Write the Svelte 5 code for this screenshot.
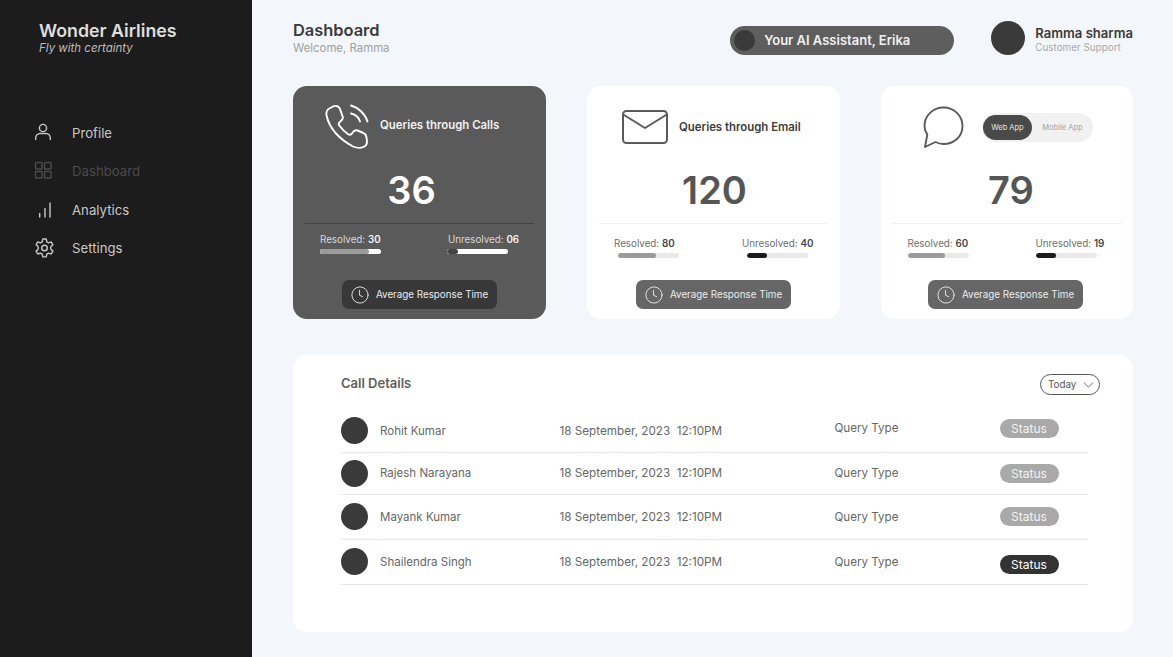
<script>
  const nav = [
    { label: 'Profile', icon: 'user' },
    { label: 'Dashboard', icon: 'grid', dim: true },
    { label: 'Analytics', icon: 'bars' },
    { label: 'Settings', icon: 'gear' },
  ];

  const cards = [
    { kind: 'calls', title: 'Queries through Calls', total: 36, resolved: '30', unresolved: '06', done: 80, open: 18, dark: true },
    { kind: 'email', title: 'Queries through Email', total: 120, resolved: '80', unresolved: '40', done: 62, open: 33 },
    { kind: 'chat', total: 79, resolved: '60', unresolved: '19', done: 62, open: 33 },
  ];

  const calls = [
    { name: 'Rohit Kumar', status: 'Status', cls: 'r1' },
    { name: 'Rajesh Narayana', status: 'Status', cls: 'r2' },
    { name: 'Mayank Kumar', status: 'Status', cls: 'r3' },
    { name: 'Shailendra Singh', status: 'Status', cls: 'r4', active: true },
  ];
</script>

<div class="layout">
  <aside class="sidebar">
    <div class="brand">
      <h1>Wonder Airlines</h1>
      <p>Fly with certainty</p>
    </div>
    <nav>
      {#each nav as item}
        <div class="nav-item" class:dim={item.dim}>
          <svg viewBox="0 0 20 20" width="20" height="20" fill="none" stroke="currentColor" stroke-width="1.4" stroke-linecap="round" stroke-linejoin="round">
            {#if item.icon === 'user'}
              <circle cx="9" cy="5" r="3.600" />
              <path d="M1.700 16.500v-1.500c0-2.500 2-4.500 4.300-4.500h6c2.400 0 4.300 2 4.300 4.500v1.500" />
            {:else if item.icon === 'grid'}
              <rect x="1.500" y="1.500" width="6.500" height="6.500" rx=".5" />
              <rect x="10.500" y="1.500" width="6.500" height="6.500" rx=".5" />
              <rect x="1.500" y="10.500" width="6.500" height="6.500" rx=".5" />
              <rect x="10.500" y="10.500" width="6.500" height="6.500" rx=".5" />
            {:else if item.icon === 'bars'}
              <path d="M5.700 17v-3.500M11 17V8.500M16 17V3" />
            {:else}
              <circle cx="10.500" cy="10" r="2.800" />
              <path d="M8.800 1h3.400l.6 2.800 1.700 1 2.700-.9 1.700 2.900-2.100 1.900v2.500l2.100 1.900-1.700 2.900-2.700-.9-1.700 1-.6 2.800H8.800l-.6-2.800-1.700-1-2.700.9-1.700-2.900 2.100-1.900V8.700L2.100 6.800 3.800 3.900l2.700.9 1.700-1z" />
            {/if}
          </svg>
          <span>{item.label}</span>
        </div>
      {/each}
    </nav>
  </aside>

  <main class="content">
    <header class="topbar">
      <div class="heading">
        <h2>Dashboard</h2>
        <p>Welcome, Ramma</p>
      </div>
      <div class="assistant">
        <span class="assistant-dot"></span>
        <span>Your AI Assistant, Erika</span>
      </div>
      <div class="account">
        <span class="account-avatar"></span>
        <div class="account-text">
          <strong>Ramma sharma</strong>
          <small>Customer Support</small>
        </div>
      </div>
    </header>

    <section class="cards">
      {#each cards as card}
        <article class="card {card.kind}" class:dark={card.dark}>
          <div class="card-head">
            {#if card.kind === 'calls'}
              <svg class="head-icon" viewBox="0 0 46 46" width="46" height="46" fill="none" stroke="currentColor" stroke-width="1.900" stroke-linecap="round" stroke-linejoin="round">
                <path d="M8 2.500 3.500 5C1.500 6.500 1 8.500 1.500 11c1 6 4 12 9 18 5 5.500 11 10 17.500 13.500 3.500 1.500 7 2 10.500.5 2.500-1 3.500-3 3.500-5.500 0-2.500-.5-5-1.500-7-.8-1-4-2.500-8-4-1.500-.5-3 0-4 1l-2 2.500c-1 1-2.200 1-3.300.3-3-2-6.200-5-8.700-8.500-1-1.300-1-2.500 0-3.500l2.300-2.300c1-1 1.200-2.500.7-3.800L15 5c-1-2.500-4-4-7-2.500Z" />
                <path d="M26 9.500c4 1 8 4 9 8" />
                <path d="M26 1.500c7 2 14 8 16.500 16" />
              </svg>
              <h3>{card.title}</h3>
            {:else if card.kind === 'email'}
              <svg class="head-icon" viewBox="0 0 46 34" width="46" height="34" fill="none" stroke="currentColor" stroke-width="2" stroke-linecap="round" stroke-linejoin="round">
                <rect x="1" y="1" width="44" height="32" rx="3.500" />
                <path d="M2 5l21 13L44 5" />
              </svg>
              <h3>{card.title}</h3>
            {:else}
              <svg class="head-icon" viewBox="0 0 42 42" width="42" height="42" fill="none" stroke="currentColor" stroke-width="1.900" stroke-linecap="round" stroke-linejoin="round">
                <path d="M3 41l2.300-12.500C3 25 2.500 22 2.500 20 2.500 9.500 11 1.500 21.500 1.500S40.500 9.500 40.500 20 32 38 21.500 38c-3 0-5.500-.7-8-2z" />
              </svg>
              <div class="toggle">
                <span class="toggle-on">Web App</span>
                <span class="toggle-off">Mobile App</span>
              </div>
            {/if}
          </div>
          <div class="total">{card.total}</div>
          <div class="stats">
            <div class="stat">
              <span class="stat-label">Resolved: <b>{card.resolved}</b></span>
              <span class="bar"><span class="fill done" style="width: {card.done}%"></span></span>
            </div>
            <div class="stat">
              <span class="stat-label">Unresolved: <b>{card.unresolved}</b></span>
              <span class="bar"><span class="fill open" style="width: {card.open}%"></span></span>
            </div>
          </div>
          <button type="button" class="response">
            <svg viewBox="0 0 20 20" width="18" height="18" fill="none" stroke="currentColor" stroke-width="1" stroke-linecap="round" stroke-linejoin="round">
              <circle cx="10" cy="10" r="9" />
              <path d="M9.500 4.800v5.500l3.500 1.600" />
            </svg>
            Average Response Time
          </button>
        </article>
      {/each}
    </section>

    <section class="details">
      <div class="details-head">
        <h3>Call Details</h3>
        <button type="button" class="range">
          Today
          <svg viewBox="0 0 12 7" width="11" height="6" fill="none" stroke="currentColor" stroke-width="1" stroke-linecap="round" stroke-linejoin="round"><path d="M1 1l5 5 5-5" /></svg>
        </button>
      </div>
      <div class="rows">
        {#each calls as call}
          <div class="row {call.cls}">
            <div class="person">
              <span class="avatar"></span>
              <span class="name">{call.name}</span>
            </div>
            <span class="when">18 September, 2023&nbsp; 12:10PM</span>
            <span class="query">Query Type</span>
            <span class="status" class:active={call.active}>{call.status}</span>
          </div>
        {/each}
      </div>
    </section>
  </main>
</div>

<style>
  :global(body) {
    font-family: Inter, "Noto Sans", sans-serif;
    background: #f3f7fb;
    color: #333;
  }

  h1, h2, h3, p {
    margin: 0;
  }

  .layout {
    display: flex;
    width: 1173px;
    height: 657px;
    overflow: hidden;
  }

  .sidebar {
    flex: 0 0 252px;
    background: #1c1c1c;
    color: #d9d9d9;
    padding: 21px 0 0 39px;
    box-sizing: border-box;
  }

  .brand h1 {
    font-size: 17.800px;
    line-height: 20px;
    font-weight: 600;
    color: #dedede;
  }

  .brand p {
    font-size: 11.500px;
    line-height: 14px;
    font-style: italic;
    color: #bdbdbd;
  }

  nav {
    margin: 59px 0 0 -5px;
    display: flex;
    flex-direction: column;
  }

  .nav-item {
    display: flex;
    align-items: center;
    gap: 18px;
    height: 38.300px;
    font-size: 13.200px;
    color: #c8c8c8;
  }

  .nav-item.dim {
    color: #4a4a4a;
  }

  .content {
    flex: 1;
    padding: 0 40px 0 41px;
    box-sizing: border-box;
    min-width: 0;
  }

  .topbar {
    display: flex;
    align-items: center;
    height: 86px;
    padding-bottom: 6px;
    box-sizing: border-box;
  }

  .heading {
    flex: 1;
    margin-top: -4px;
  }

  .heading h2 {
    font-size: 16.400px;
    line-height: 18px;
    font-weight: 600;
    color: #3a3a3a;
  }

  .heading p {
    margin-top: 2px;
    font-size: 11.400px;
    line-height: 14px;
    color: #a0a0a0;
  }

  .assistant {
    display: flex;
    align-items: center;
    gap: 9px;
    width: 224px;
    height: 29px;
    padding-left: 4px;
    box-sizing: border-box;
    border-radius: 15px;
    background: #5e5e5e;
    color: #f1f1f1;
    font-size: 13px;
    font-weight: 600;
    margin-right: 37px;
  }

  .assistant-dot {
    width: 21px;
    height: 21px;
    border-radius: 50%;
    background: #3a3a3a;
  }

  .account {
    display: flex;
    align-items: center;
    gap: 10px;
    margin-bottom: 4px;
  }

  .account-avatar {
    width: 34px;
    height: 34px;
    border-radius: 50%;
    background: #3a3a3a;
  }

  .account-text {
    padding-top: 2px;
  }

  .account strong {
    display: block;
    font-size: 13.100px;
    line-height: 15px;
    font-weight: 600;
    color: #3a3a3a;
  }

  .account small {
    display: block;
    font-size: 9.900px;
    line-height: 12px;
    color: #a8a8a8;
  }

  .cards {
    display: flex;
    gap: 41px;
  }

  .card {
    flex: 0 0 253px;
    height: 233px;
    background: #fff;
    border-radius: 14px;
    color: #5a5a5a;
    box-sizing: border-box;
    display: flex;
    flex-direction: column;
    align-items: center;
  }

  .card.chat {
    flex-basis: 252px;
  }

  .card.dark {
    background: #5a5a5a;
    color: #fff;
  }

  .card-head {
    display: flex;
    align-items: center;
    height: 66px;
    width: 100%;
    box-sizing: border-box;
    margin-top: 8px;
  }

  .calls .card-head {
    padding-left: 32px;
    gap: 9px;
  }

  .calls .card-head h3 {
    padding-bottom: 4px;
  }

  .email .card-head {
    padding-left: 35px;
    gap: 11px;
  }

  .chat .card-head {
    padding-left: 41px;
    gap: 18px;
  }

  .card-head h3 {
    font-size: 11.400px;
    font-weight: 600;
    color: #3c3c3c;
  }

  .dark .card-head h3 {
    color: #f1f1f1;
  }

  .head-icon {
    flex: none;
  }

  .toggle {
    display: flex;
    align-items: center;
    width: 111px;
    height: 29px;
    border-radius: 15px;
    background: #f1f1f1;
    font-size: 7.500px;
  }

  .toggle-on {
    width: 49px;
    height: 25px;
    margin-left: 1px;
    border-radius: 13px;
    background: #4a4a4a;
    color: #e6e6e6;
    display: flex;
    align-items: center;
    justify-content: center;
  }

  .toggle-off {
    flex: 1;
    text-align: center;
    color: #a2a2a2;
  }

  .total {
    font-size: 38px;
    line-height: 47px;
    font-weight: 600;
    margin-top: 7px;
    height: 56px;
    color: #555;
  }

  .calls .total {
    margin-right: 16px;
    color: #fff;
  }

  .email .total {
    margin-left: 2px;
  }

  .chat .total {
    margin-left: 8px;
  }

  .stats {
    width: 229px;
    box-sizing: border-box;
    border-top: 1px solid #f1f1f1;
    display: flex;
    justify-content: space-between;
    padding: 13px 15px 0 15px;
    height: 57px;
  }

  .dark .stats {
    border-top-color: #444;
    padding-top: 9px;
  }

  .stat {
    display: flex;
    flex-direction: column;
    width: 60px;
  }

  .stat:last-child {
    width: 71px;
  }

  .stat-label {
    font-size: 9.800px;
    line-height: 13px;
    white-space: nowrap;
    color: #6e6e6e;
  }

  .stat-label b {
    font-weight: 600;
    color: #444;
  }

  .dark .stat-label {
    color: #d8d8d8;
  }

  .dark .stat-label b {
    color: #f4f4f4;
  }

  .bar {
    display: block;
    width: 61px;
    height: 5px;
    margin-top: 3px;
    border-radius: 3px;
    background: #e9e9e9;
    overflow: hidden;
  }

  .email .stat .bar {
    margin-left: 4px;
  }

  .email .stat:last-child .bar {
    margin-left: 5px;
  }

  .calls .stat:last-child .bar {
    margin-left: -1px;
  }

  .dark .bar {
    background: #fff;
  }

  .fill {
    display: block;
    height: 100%;
    border-radius: 3px;
  }

  .done {
    background: #9b9b9b;
  }

  .open {
    background: #1c1c1c;
  }

  .dark .open {
    background: #444;
  }

  .response {
    display: flex;
    align-items: center;
    gap: 7px;
    width: 155px;
    height: 29px;
    padding: 0 0 0 9px;
    box-sizing: border-box;
    border: 0;
    border-radius: 7px;
    background: #666;
    color: #ececec;
    font: 400 9.800px Inter, sans-serif;
  }

  .chat .response {
    margin-right: 3px;
  }

  .dark .response {
    background: #383838;
  }

  .details {
    margin-top: 36px;
    height: 277px;
    padding: 18px 45px 0 48px;
    box-sizing: border-box;
    background: #fff;
    border-radius: 14px;
  }

  .details-head {
    display: flex;
    align-items: center;
    justify-content: space-between;
    height: 20px;
    margin-right: -12px;
  }

  .details-head h3 {
    font-size: 13px;
    font-weight: 600;
    color: #606060;
  }

  .range {
    display: flex;
    align-items: center;
    gap: 7px;
    width: 60px;
    height: 21px;
    margin-top: 3px;
    padding: 0 0 0 7px;
    box-sizing: border-box;
    border: 1px solid #555;
    border-radius: 11px;
    background: #fff;
    color: #555;
    font: 400 9.800px Inter, sans-serif;
  }

  .rows {
    margin-top: 16px;
  }

  .row {
    display: grid;
    grid-template-columns: 218.500px 275px 165px 59px;
    align-items: center;
    box-sizing: border-box;
    border-bottom: 1px solid #e8e8e8;
    font-size: 11.600px;
    color: #666;
  }

  .r1 { height: 44px; }
  .r2 { height: 41.500px; }
  .r3 { height: 45px; }
  .r4 { height: 45px; }

  .r1 .query,
  .r1 .status {
    margin-bottom: 5px;
  }

  .r4 .status {
    margin-top: 6px;
  }

  .person {
    display: flex;
    align-items: center;
    gap: 12px;
  }

  .name {
    font-size: 11.500px;
  }

  .when {
    font-size: 11.700px;
  }

  .avatar {
    width: 27px;
    height: 27px;
    border-radius: 50%;
    background: #3a3a3a;
  }

  .status {
    width: 59px;
    height: 19px;
    border-radius: 10px;
    background: #a9a9a9;
    color: #f1f1f1;
    font-size: 12px;
    display: flex;
    align-items: center;
    justify-content: center;
  }

  .status.active {
    background: #333;
    color: #fff;
  }
</style>
